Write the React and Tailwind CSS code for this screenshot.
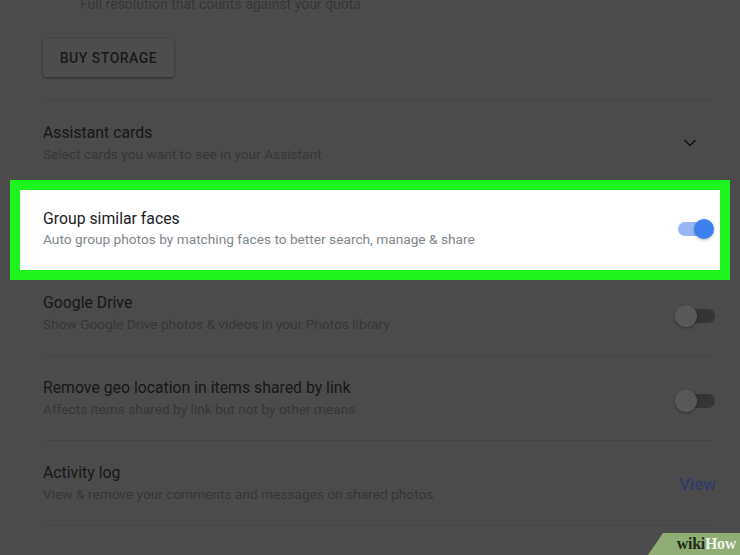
import { ChevronDown } from 'lucide-react';

const rows = [
  { title: 'Google Drive', sub: 'Show Google Drive photos & videos in your Photos library', kind: 'toggle' },
  { title: 'Remove geo location in items shared by link', sub: 'Affects items shared by link but not by other means', kind: 'toggle' },
  { title: 'Activity log', sub: 'View & remove your comments and messages on shared photos', kind: 'view' },
];

function Toggle({ on }) {
  return (
    <div className="relative w-[40px] h-[22px] shrink-0">
      <div
        className={
          on
            ? 'absolute left-[3px] right-[4px] top-[4px] h-[14px] rounded-full bg-[#97b8f6]'
            : 'absolute left-[5px] right-0 top-[4px] h-[14px] rounded-full bg-[#353535]'
        }
      />
      <div
        className={
          on
            ? 'absolute left-[19px] top-[1px] w-[20px] h-[20px] rounded-full bg-[#3d80f0] shadow-[0_1px_3px_rgba(0,0,0,0.3)]'
            : 'absolute left-0 top-0 w-[22px] h-[22px] rounded-full bg-[#585858] shadow-[0_1px_3px_rgba(0,0,0,0.35)]'
        }
      />
    </div>
  );
}

function Row({ title, sub, right }) {
  return (
    <div className="flex items-center h-[85px] border-b border-[#454545]">
      <div className="flex-1 pt-[1px]">
        <div className="text-[15.8px] leading-[20px] text-[#171717]">{title}</div>
        <div className="text-[13.7px] leading-[20px] text-[#363636] mt-[1px]">{sub}</div>
      </div>
      {right}
    </div>
  );
}

export default function App() {
  return (
    <div
      className="relative w-[740px] h-[555px] overflow-hidden bg-[#4b4b4b]"
      style={{ fontFamily: 'Roboto, "Liberation Sans", sans-serif' }}
    >
      <div className="pl-[43px] pr-[25px]">
        <div className="pl-[37px] -mt-[6px] text-[14px] leading-[20px] text-[#363636]">
          Full resolution that counts against your quota
        </div>

        <div className="h-[87px] border-b border-[#454545] pt-[25px]">
          <button className="h-[38px] w-[131px] rounded-[3px] bg-[#4d4d4d] shadow-[0_1px_3px_rgba(0,0,0,0.45)] text-[14px] font-medium tracking-[0.5px] text-[#1a1a1a]">
            BUY STORAGE
          </button>
        </div>

        <Row
          title="Assistant cards"
          sub="Select cards you want to see in your Assistant"
          right={
            <div className="mr-[13px] w-[24px] h-[24px] flex items-center justify-center text-[#151515]">
              <ChevronDown size={20} strokeWidth={2} />
            </div>
          }
        />

        <div className="-ml-[33px] -mr-[15px] -mt-[6px] -mb-[9px] relative border-[10px] border-[#1ef51e] bg-white flex items-center pl-[23px] pr-[5px] pt-[19px] pb-[21px]">
          <div className="flex-1">
            <div className="text-[15.8px] leading-[20px] text-[#202124]">Group similar faces</div>
            <div className="text-[13.7px] leading-[20px] text-[#80868b]">
              Auto group photos by matching faces to better search, manage &amp; share
            </div>
          </div>
          <Toggle on />
        </div>

        {rows.map((r) => (
          <Row
            key={r.title}
            title={r.title}
            sub={r.sub}
            right={
              r.kind === 'toggle' ? (
                <div className="mt-[5px]">
                  <Toggle />
                </div>
              ) : (
                <div className="text-[17px] text-[#2b3870] mt-[3px] mr-[-1px]">View</div>
              )
            }
          />
        ))}
      </div>

      <div className="absolute right-0 bottom-0 h-[22px] w-[92px] bg-[#8fad74] [clip-path:polygon(15px_0,100%_0,100%_100%,0_100%)] flex items-center justify-end pr-[4px]">
        <span
          className="text-[16px] font-bold leading-none tracking-[-0.3px]"
          style={{ fontFamily: '"Liberation Serif", serif' }}
        >
          <span className="text-[#1e2a16]">wiki</span>
          <span className="text-[#eef3e6]">How</span>
        </span>
      </div>
    </div>
  );
}
